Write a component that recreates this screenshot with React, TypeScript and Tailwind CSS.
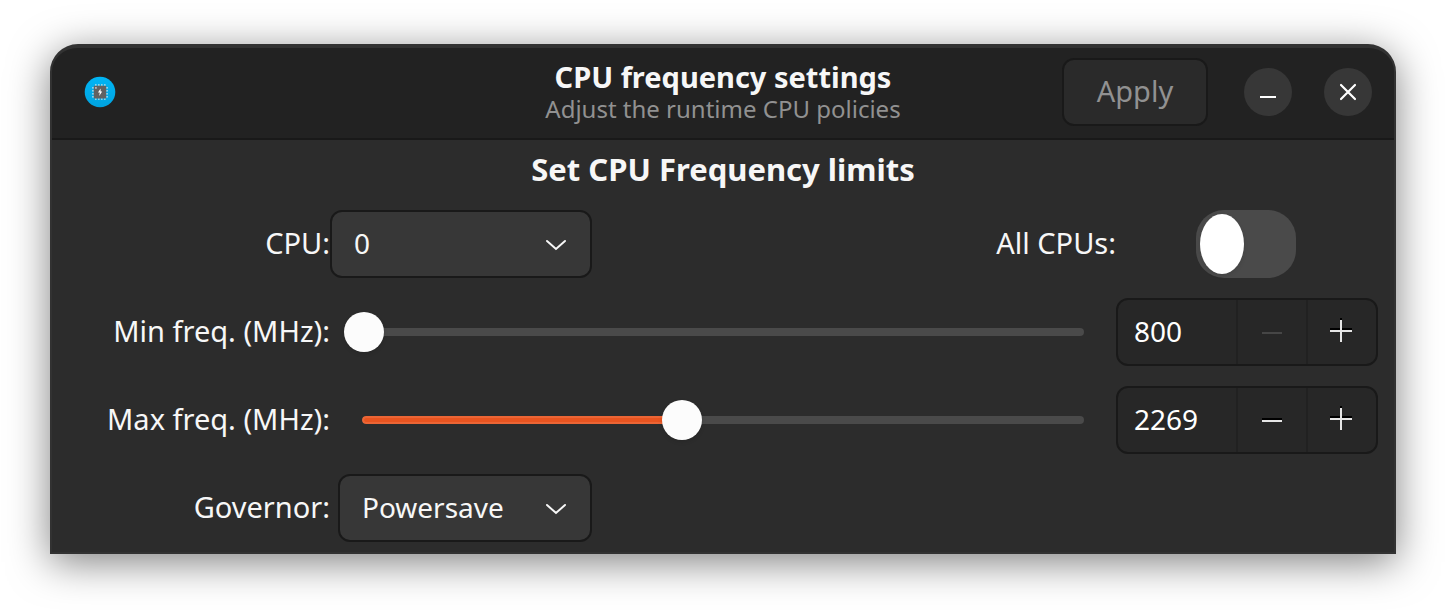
import { useState } from "react";

const FREQ_MIN = 800;
const FREQ_MAX = 4126;

function AppIcon() {
  const pins = [11, 14, 17, 20];
  return (
    <svg viewBox="0 0 32 32" className="ml-8 size-8" aria-hidden="true">
      <defs>
        <linearGradient id="disc" x1="0" y1="0" x2="0" y2="1">
          <stop offset="0" stopColor="#00b5f5" />
          <stop offset="1" stopColor="#00a3e0" />
        </linearGradient>
      </defs>
      <circle cx="16" cy="16" r="15.3" fill="url(#disc)" />
      <g fill="#8ad4ee">
        {pins.map((p) => (
          <g key={p}>
            <rect x={p} y="8" width="1.6" height="2" />
            <rect x={p} y="22" width="1.6" height="2" />
            <rect x="8" y={p} width="2" height="1.6" />
            <rect x="22" y={p} width="2" height="1.6" />
          </g>
        ))}
      </g>
      <rect x="9.8" y="9.8" width="12.4" height="12.6" rx="1" fill="#626262" />
      <rect x="11" y="11" width="1.8" height="1.8" fill="#b5b5b5" />
      <path d="M16.6 12.4 14 16.6h1.8l-.6 3.4 3-4.4h-1.6z" fill="#fff" />
    </svg>
  );
}

function Chevron() {
  return (
    <svg viewBox="0 0 24 24" className="pointer-events-none col-start-1 row-start-1 mr-6 size-6 justify-self-end" aria-hidden="true">
      <path d="M3 9 12 17l9-8" fill="none" stroke="#f7f7f7" strokeWidth="2" strokeLinecap="round" />
    </svg>
  );
}

function Dropdown({ id, options, className }: { id: string; options: string[]; className: string }) {
  return (
    <div className={`grid items-center ${className}`}>
      <select
        id={id}
        className="col-start-1 row-start-1 h-[68px] w-full appearance-none rounded-xl border-2 border-[#191919] bg-[#373737] pb-0.5 pl-[22px] pr-14 text-[28px] text-[#f7f7f7]"
      >
        {options.map((o) => (
          <option key={o}>{o}</option>
        ))}
      </select>
      <Chevron />
    </div>
  );
}

function FrequencyRow({ id, label, initial }: { id: string; label: string; initial: number }) {
  const [value, setValue] = useState(initial);
  const clamp = (v: number) => Math.min(FREQ_MAX, Math.max(FREQ_MIN, v));
  const percent = ((value - FREQ_MIN) / (FREQ_MAX - FREQ_MIN)) * 100;
  const atMin = value <= FREQ_MIN;
  return (
    <>
      <label htmlFor={id} className="justify-self-end pb-0.5">
        {label}
      </label>
      <div className="ml-3.5 mr-3 grid items-center">
        <div className="col-start-1 row-start-1 ml-[18px] mr-5 h-2 overflow-hidden rounded-full bg-[#4a4a4a]">
          {!atMin && <div className="h-full rounded-l-full border-2 border-r-0 border-[#ec6535] bg-[#e95420]" style={{ width: `${percent}%` }} />}
        </div>
        <input
          id={id}
          type="range"
          min={FREQ_MIN}
          max={FREQ_MAX}
          value={value}
          onChange={(e) => setValue(Number(e.target.value))}
          className="col-start-1 row-start-1 h-10 w-full appearance-none bg-transparent [&::-webkit-slider-thumb]:size-10 [&::-webkit-slider-thumb]:appearance-none [&::-webkit-slider-thumb]:rounded-full [&::-webkit-slider-thumb]:bg-[#fcfcfc] [&::-webkit-slider-thumb]:shadow-[0_2px_4px_rgba(0,0,0,0.1)]"
        />
      </div>
      <div className="flex h-[68px] overflow-hidden rounded-xl border-2 border-[#191919] bg-[#272727]">
        <input
          type="number"
          aria-label={`${label} value`}
          min={FREQ_MIN}
          max={FREQ_MAX}
          value={value}
          onChange={(e) => setValue(clamp(Number(e.target.value)))}
          className="w-0 min-w-0 flex-1 appearance-none bg-transparent pb-0.5 pl-4 text-[28px] text-white [-moz-appearance:textfield] [&::-webkit-inner-spin-button]:appearance-none"
        />
        <button
          type="button"
          aria-label="Decrease"
          disabled={atMin}
          onClick={() => setValue(clamp(value - 1))}
          className="flex w-[70px] items-center justify-center border-l-2 border-[#212121]"
        >
          <svg viewBox="0 0 24 24" className="size-6" aria-hidden="true">
            {!atMin && <rect x="2" y="10" width="20" height="2" fill="#000" />}
            <rect x="2" y="12" width="20" height="2" fill={atMin ? "#464646" : "#e6e6e6"} />
          </svg>
        </button>
        <button
          type="button"
          aria-label="Increase"
          onClick={() => setValue(clamp(value + 1))}
          className="flex w-[70px] items-center justify-center border-l-2 border-[#212121]"
        >
          <svg viewBox="0 0 24 24" className="size-6 overflow-visible" aria-hidden="true">
            <path d="M0 8h22v2H0zM10-2h2v22h-2z" fill="#000" />
            <path d="M0 10h22v2H0zM10 0h2v22h-2z" fill="#e6e6e6" />
          </svg>
        </button>
      </div>
    </>
  );
}

export default function App() {
  return (
    <div className="bg-white px-[50px] pb-14 pt-11 font-['Noto_Sans',sans-serif] text-[29px] text-[#f7f7f7]">
      <main className="overflow-hidden rounded-t-[28px] border-x-2 border-b-2 border-t-4 border-[#323232] bg-[#2c2c2c] shadow-[0_8px_40px_rgba(0,0,0,0.5)]">
        <header className="grid h-[92px] grid-cols-[1fr_auto_1fr] items-center border-b-2 border-[#191919] bg-[#222222] pb-0.5">
          <AppIcon />
          <div className="pt-0.5 text-center">
            <h1 className="font-bold leading-8">CPU frequency settings</h1>
            <p className="text-[24px] leading-8 text-[#919191]">Adjust the runtime CPU policies</p>
          </div>
          <div className="flex items-center justify-end pr-[22px]">
            <button type="button" disabled className="mr-9 h-[68px] w-[146px] rounded-xl border-2 border-[#191919] bg-[#2a2a2a] pb-0.5 text-[#919191]">
              Apply
            </button>
            <button type="button" aria-label="Minimize" className="mr-8 flex size-12 items-center justify-center rounded-full bg-[#373737]">
              <svg viewBox="0 0 24 24" className="size-6" aria-hidden="true">
                <rect x="4" y="16" width="16" height="2" fill="#fff" />
              </svg>
            </button>
            <button type="button" aria-label="Close" className="flex size-12 items-center justify-center rounded-full bg-[#373737]">
              <svg viewBox="0 0 24 24" className="size-6" aria-hidden="true">
                <path d="m5 5 14 14M19 5 5 19" stroke="#fff" strokeWidth="2.2" strokeLinecap="round" />
              </svg>
            </button>
          </div>
        </header>
        <section className="pb-2.5 pr-4">
          <h2 className="flex h-[70px] items-center justify-center pb-3 pl-4 text-[31px] font-bold">Set CPU Frequency limits</h2>
          <div className="grid grid-cols-[278px_minmax(0,1fr)_262px] items-center gap-y-5">
            <label htmlFor="cpu" className="justify-self-end pb-0.5">
              CPU:
            </label>
            <div className="flex items-center justify-between">
              <Dropdown id="cpu" options={["0", "1", "2", "3"]} className="w-[262px]" />
              <label htmlFor="all-cpus" className="pb-0.5">
                All CPUs:
              </label>
            </div>
            <input
              id="all-cpus"
              type="checkbox"
              role="switch"
              className="ml-20 flex h-[68px] w-[100px] appearance-none rounded-[28px] bg-[#4a4a4a] p-1 before:h-[60px] before:w-11 before:rounded-[50%] before:bg-white before:shadow-[0_2px_4px_rgba(0,0,0,0.1)] checked:justify-end checked:bg-[#e95420]"
            />
            <FrequencyRow id="min-freq" label="Min freq. (MHz):" initial={800} />
            <FrequencyRow id="max-freq" label="Max freq. (MHz):" initial={2269} />
            <label htmlFor="governor" className="justify-self-end pb-0.5">
              Governor:
            </label>
            <Dropdown id="governor" options={["Powersave", "Performance"]} className="ml-2 w-[254px]" />
          </div>
        </section>
      </main>
    </div>
  );
}
